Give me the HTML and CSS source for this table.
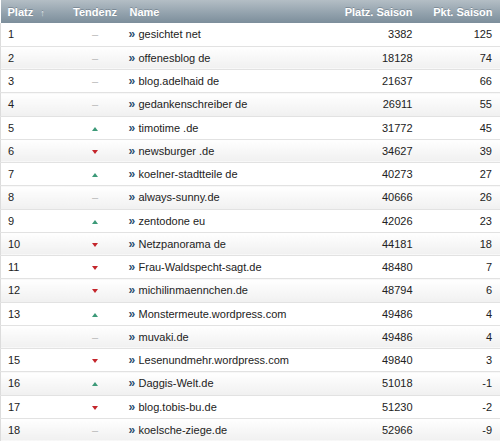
FILE: index.html
```html
<!DOCTYPE html>
<html lang="de">
<head>
<meta charset="utf-8">
<link rel="stylesheet" href="styles.css">
</head>
<body>
<table class="rank">
  <colgroup>
    <col class="c-platz"><col class="c-tend"><col class="c-name"><col class="c-ps"><col class="c-pk">
  </colgroup>
  <thead>
    <tr>
      <th class="left">Platz <span class="sort">&#8593;</span></th>
      <th class="center">Tendenz</th>
      <th class="left name-h">Name</th>
      <th class="right">Platz. Saison</th>
      <th class="right">Pkt. Saison</th>
    </tr>
  </thead>
  <tbody>
    <tr><td>1</td><td class="center"><span class="same">&#8211;</span></td><td class="name"><span class="arr">&#187;</span>gesichtet net</td><td class="right">3382</td><td class="right">125</td></tr>
    <tr><td>2</td><td class="center"><span class="same">&#8211;</span></td><td class="name"><span class="arr">&#187;</span>offenesblog de</td><td class="right">18128</td><td class="right">74</td></tr>
    <tr><td>3</td><td class="center"><span class="same">&#8211;</span></td><td class="name"><span class="arr">&#187;</span>blog.adelhaid de</td><td class="right">21637</td><td class="right">66</td></tr>
    <tr><td>4</td><td class="center"><span class="same">&#8211;</span></td><td class="name"><span class="arr">&#187;</span>gedankenschreiber de</td><td class="right">26911</td><td class="right">55</td></tr>
    <tr><td>5</td><td class="center"><span class="up"></span></td><td class="name"><span class="arr">&#187;</span>timotime .de</td><td class="right">31772</td><td class="right">45</td></tr>
    <tr><td>6</td><td class="center"><span class="down"></span></td><td class="name"><span class="arr">&#187;</span>newsburger .de</td><td class="right">34627</td><td class="right">39</td></tr>
    <tr><td>7</td><td class="center"><span class="up"></span></td><td class="name"><span class="arr">&#187;</span>koelner-stadtteile de</td><td class="right">40273</td><td class="right">27</td></tr>
    <tr><td>8</td><td class="center"><span class="same">&#8211;</span></td><td class="name"><span class="arr">&#187;</span>always-sunny.de</td><td class="right">40666</td><td class="right">26</td></tr>
    <tr><td>9</td><td class="center"><span class="up"></span></td><td class="name"><span class="arr">&#187;</span>zentodone eu</td><td class="right">42026</td><td class="right">23</td></tr>
    <tr><td>10</td><td class="center"><span class="down"></span></td><td class="name"><span class="arr">&#187;</span>Netzpanorama de</td><td class="right">44181</td><td class="right">18</td></tr>
    <tr><td>11</td><td class="center"><span class="down"></span></td><td class="name"><span class="arr">&#187;</span>Frau-Waldspecht-sagt.de</td><td class="right">48480</td><td class="right">7</td></tr>
    <tr><td>12</td><td class="center"><span class="down"></span></td><td class="name"><span class="arr">&#187;</span>michilinmaennchen.de</td><td class="right">48794</td><td class="right">6</td></tr>
    <tr><td>13</td><td class="center"><span class="up"></span></td><td class="name"><span class="arr">&#187;</span>Monstermeute.wordpress.com</td><td class="right">49486</td><td class="right">4</td></tr>
    <tr><td></td><td class="center"><span class="same">&#8211;</span></td><td class="name"><span class="arr">&#187;</span>muvaki.de</td><td class="right">49486</td><td class="right">4</td></tr>
    <tr><td>15</td><td class="center"><span class="down"></span></td><td class="name"><span class="arr">&#187;</span>Lesenundmehr.wordpress.com</td><td class="right">49840</td><td class="right">3</td></tr>
    <tr><td>16</td><td class="center"><span class="up"></span></td><td class="name"><span class="arr">&#187;</span>Daggis-Welt.de</td><td class="right">51018</td><td class="right">-1</td></tr>
    <tr><td>17</td><td class="center"><span class="down"></span></td><td class="name"><span class="arr">&#187;</span>blog.tobis-bu.de</td><td class="right">51230</td><td class="right">-2</td></tr>
    <tr><td>18</td><td class="center"><span class="same">&#8211;</span></td><td class="name"><span class="arr">&#187;</span>koelsche-ziege.de</td><td class="right">52966</td><td class="right">-9</td></tr>
  </tbody>
</table>
</body>
</html>
```

FILE: styles.css
```css
html, body {
  margin: 0;
  padding: 0;
  background: #ffffff;
}
body {
  font-family: "Liberation Sans", Arial, sans-serif;
  font-size: 11px;
  color: #222222;
}
.rank {
  width: 500px;
  border-collapse: collapse;
  table-layout: fixed;
}
.c-platz { width: 64px; }
.c-tend { width: 62px; }
.c-name { width: 204px; }
.c-ps { width: 90px; }
.c-pk { width: 80px; }

.rank thead th {
  height: 23px;
  padding: 0 8px 0 7px;
  color: #ffffff;
  font-weight: bold;
  font-size: 11px;
  background: linear-gradient(to bottom, #b4bec5 0%, #94a3ae 55%, #7c8e9b 100%);
  text-shadow: 0 -1px 0 rgba(60, 75, 90, 0.35);
  box-sizing: border-box;
}
.rank thead th.name-h { padding-left: 3px; }
.sort {
  display: inline-block;
  margin-left: 4px;
  font-size: 9px;
  color: #e8edf0;
}
.rank tbody td {
  height: 23.25px;
  padding: 0 8px 0 7px;
  border-bottom: 1px solid #e2e2e2;
  box-sizing: border-box;
  white-space: nowrap;
  overflow: hidden;
}
.rank tbody tr {
  border-left: 1px solid #dcdcdc;
  border-right: 1px solid #dcdcdc;
}
.rank tbody tr:nth-child(even) td {
  background: linear-gradient(to bottom, #ffffff 0%, #f0f0f0 100%);
}
.rank tbody td.name { padding-left: 2px; }
.left { text-align: left; }
.center { text-align: center; }
.right { text-align: right; }

.arr {
  display: inline-block;
  width: 10px;
  color: #2b4f70;
  font-weight: bold;
  font-size: 12px;
  line-height: 1;
}
.same {
  color: #b8b8b8;
}
.up, .down {
  display: inline-block;
  width: 0;
  height: 0;
  border-left: 3.5px solid transparent;
  border-right: 3.5px solid transparent;
  vertical-align: middle;
}
.up {
  border-bottom: 4px solid #3c9a78;
}
.down {
  border-top: 4px solid #c4252b;
}
```
